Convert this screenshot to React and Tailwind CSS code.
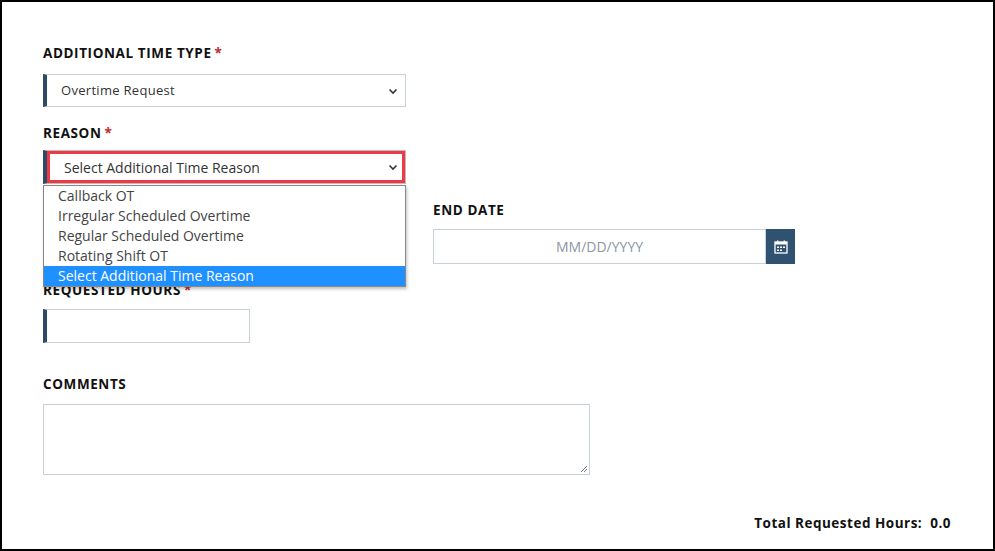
export default function App() {
  const F = { fontFamily: '"Open Sans", "Noto Sans", sans-serif' };
  const Label = ({ children, req }) => (
    <div className="text-[13.5px] font-bold text-[#111] tracking-[0.6px] leading-[18px]">
      {children}
      {req && <span className="text-[#c0282d] ml-[3px]">*</span>}
    </div>
  );
  const Chevron = () => (
    <svg width="10" height="7" viewBox="0 0 10 7" className="absolute right-[7px] top-[13px]">
      <path d="M1.5 1.5 L5 5 L8.5 1.5" fill="none" stroke="#333" strokeWidth="1.6" />
    </svg>
  );
  return (
    <div style={F} className="w-[995px] h-[551px] border-2 border-black bg-white relative overflow-hidden">
      <div className="pl-[41px] pt-[42px]">
        <Label req>ADDITIONAL TIME TYPE</Label>
        <div className="relative mt-[12px] w-[363px] h-[33px] border border-[#c8d0d8] border-l-4 border-l-[#2f4a66] bg-white text-[13px] text-[#333] pl-[14px] leading-[31px] tracking-[0.3px]">
          Overtime Request
          <Chevron />
        </div>
        <div className="mt-[17px]"><Label req>REASON</Label></div>
        <div className="relative mt-[8px] w-[363px]">
          <div className="relative h-[34px] border border-[#bbb] border-l-4 border-l-[#2f4a66] bg-[#eee]">
            <div className="absolute inset-0 border-[3px] border-[#ee3a44] bg-white text-[14px] text-[#333] pl-[14px] leading-[27px]">
              Select Additional Time Reason
            </div>
            <Chevron />
          </div>
          <div className="absolute left-0 top-[35px] w-[363px] z-10 bg-white border border-[#888] shadow-[1px_2px_3px_rgba(0,0,0,0.25)] text-[14px] text-[#444] leading-[20px]">
            {["Callback OT", "Irregular Scheduled Overtime", "Regular Scheduled Overtime", "Rotating Shift OT"].map((t) => (
              <div key={t} className="pl-[14px]">{t}</div>
            ))}
            <div className="pl-[14px] bg-[#1e90ff] text-white">Select Additional Time Reason</div>
          </div>
        </div>
        <div className="flex mt-[17px]">
          <div className="w-[390px]" />
          <div>
            <Label>END DATE</Label>
            <div className="flex mt-[10px]">
              <div className="w-[333px] h-[35px] border border-[#c8d0d8] text-center text-[14px] text-[#8a96a3] leading-[33px]">MM/DD/YYYY</div>
              <div className="w-[29px] h-[35px] bg-[#2f5270] flex items-center justify-center">
                <svg width="14" height="14" viewBox="0 0 14 14">
                  <rect x="1" y="2" width="12" height="11" fill="none" stroke="#fff" strokeWidth="1.3" />
                  <rect x="1" y="2" width="12" height="2.5" fill="#fff" />
                  <rect x="3" y="0.5" width="1.4" height="3" fill="#fff" />
                  <rect x="9.6" y="0.5" width="1.4" height="3" fill="#fff" />
                  <rect x="3" y="6.5" width="2" height="1.5" fill="#fff" />
                  <rect x="6" y="6.5" width="2" height="1.5" fill="#fff" />
                  <rect x="9" y="6.5" width="2" height="1.5" fill="#fff" />
                  <rect x="3" y="9.5" width="2" height="1.5" fill="#fff" />
                  <rect x="6" y="9.5" width="2" height="1.5" fill="#fff" />
                </svg>
              </div>
            </div>
          </div>
        </div>
        <div className="mt-[17px]"><Label req>REQUESTED HOURS</Label></div>
        <div className="mt-[10px] w-[207px] h-[34px] border border-[#c8d0d8] border-l-4 border-l-[#2f4a66]" />
        <div className="mt-[32px]"><Label>COMMENTS</Label></div>
        <div className="relative mt-[11px] w-[547px] h-[71px] border border-[#c8d0d8]">
          <svg width="8" height="8" viewBox="0 0 8 8" className="absolute right-[1px] bottom-[1px]">
            <path d="M7 1 L1 7 M7 4 L4 7" stroke="#777" strokeWidth="1" />
          </svg>
        </div>
        <div className="flex justify-end pr-[42px] mt-[38px] text-[13.5px] font-bold text-[#111] tracking-[0.5px]">
          Total Requested Hours:<span className="ml-[8px]">0.0</span>
        </div>
      </div>
    </div>
  );
}
